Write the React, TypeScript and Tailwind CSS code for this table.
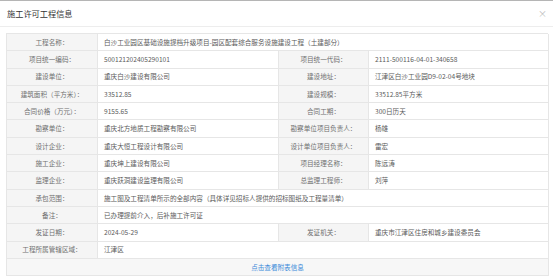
import React from 'react';

type Cell = { label: string; value: string };
type Row = { left: Cell; right?: Cell };

const rows: Row[] = [
  { left: { label: '工程名称：', value: '白沙工业园区基础设施提档升级项目-园区配套综合服务设施建设工程（土建部分）' } },
  {
    left: { label: '项目统一编码：', value: '500121202405290101' },
    right: { label: '项目统一代码：', value: '2111-500116-04-01-340658' },
  },
  {
    left: { label: '建设单位：', value: '重庆白沙建设有限公司' },
    right: { label: '建设地址：', value: '江津区白沙工业园D9-02-04号地块' },
  },
  {
    left: { label: '建筑面积（平方米）：', value: '33512.85' },
    right: { label: '建设规模：', value: '33512.85平方米' },
  },
  {
    left: { label: '合同价格（万元）：', value: '9155.65' },
    right: { label: '合同工期：', value: '300日历天' },
  },
  {
    left: { label: '勘察单位：', value: '重庆北方地质工程勘察有限公司' },
    right: { label: '勘察单位项目负责人：', value: '杨雄' },
  },
  {
    left: { label: '设计企业：', value: '重庆大恒工程设计有限公司' },
    right: { label: '设计单位项目负责人：', value: '雷宏' },
  },
  {
    left: { label: '施工企业：', value: '重庆坤上建设有限公司' },
    right: { label: '项目经理名称：', value: '陈远涛' },
  },
  {
    left: { label: '监理企业：', value: '重庆跃洞建设监理有限公司' },
    right: { label: '总监理工程师：', value: '刘萍' },
  },
  { left: { label: '承包范围：', value: '施工图及工程清单所示的全部内容（具体详见招标人提供的招标图纸及工程量清单）' } },
  { left: { label: '备注：', value: '已办理提前介入，后补施工许可证' } },
  {
    left: { label: '发证日期：', value: '2024-05-29' },
    right: { label: '发证机关：', value: '重庆市江津区住房和城乡建设委员会' },
  },
  { left: { label: '工程所属管辖区域：', value: '江津区' } },
];

const Label = ({ text }: { text: string }) => (
  <div className="h-[17.3px] flex items-center justify-center bg-[#f5f5f5] border-r border-b border-[#e6e6e6] text-[#707070] whitespace-nowrap">
    {text}
  </div>
);

const Value = ({ text, span }: { text: string; span?: boolean }) => (
  <div
    className={`h-[17.3px] flex items-center pl-[6px] border-r border-b border-[#e6e6e6] text-[#5a5a5a] whitespace-nowrap overflow-hidden ${
      span ? 'col-span-3' : ''
    }`}
  >
    {text}
  </div>
);

export default function App() {
  return (
    <div
      className="w-[553px] h-[276px] bg-white border-t border-[#b5b5b5] overflow-hidden"
      style={{ fontFamily: '"Noto Sans CJK SC", "Liberation Sans", sans-serif' }}
    >
      {/* header */}
      <div className="h-[26px] flex items-center justify-between pl-[7px] pr-[6px] border-b border-[#ededed]">
        <span className="text-[8.2px] text-[#333]">施工许可工程信息</span>
        <span className="text-[9px] text-[#bbb] leading-none">×</span>
      </div>

      {/* table */}
      <div className="mt-[6px] ml-[6px] w-[542px] grid grid-cols-[91px_181px_90px_180px] border-t border-l border-[#e6e6e6] text-[6.6px] leading-none">
        {rows.map((row, i) => (
          <React.Fragment key={i}>
            <Label text={row.left.label} />
            <Value text={row.left.value} span={!row.right} />
            {row.right && (
              <>
                <Label text={row.right.label} />
                <Value text={row.right.value} />
              </>
            )}
          </React.Fragment>
        ))}
        <div className="col-span-4 h-[17.3px] flex items-center justify-center bg-[#f7f7f7] border-r border-b border-[#e6e6e6] text-[#3d8bd9] cursor-pointer">
          点击查看附表信息
        </div>
      </div>
    </div>
  );
}
